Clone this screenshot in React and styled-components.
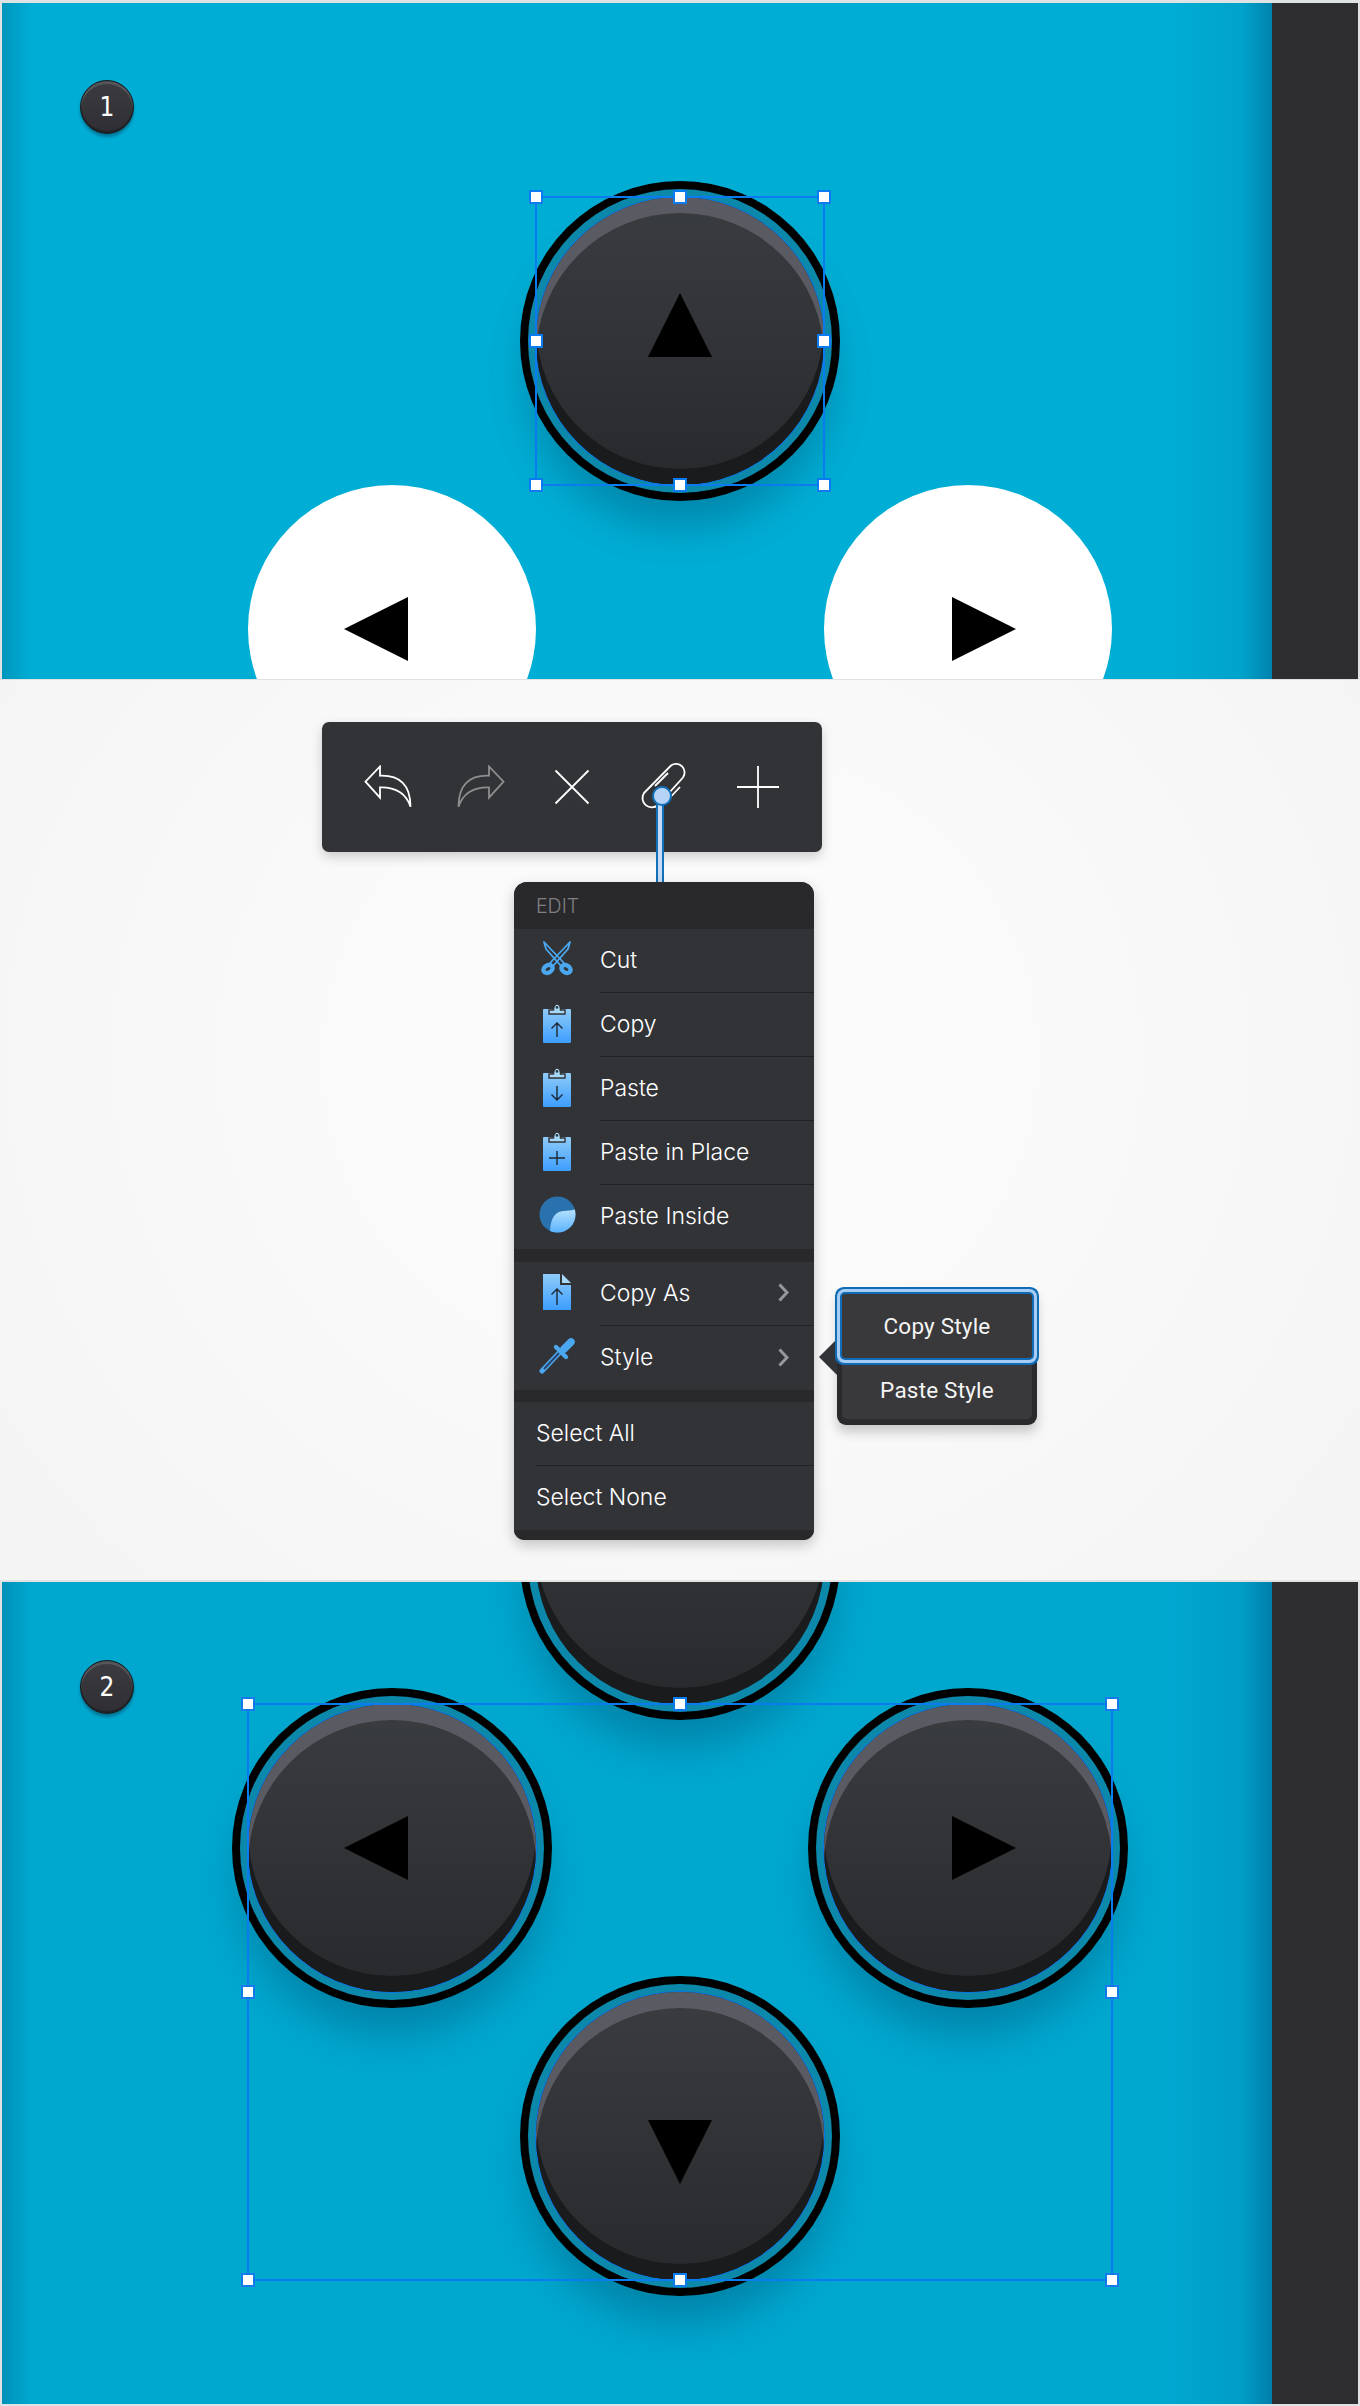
import React from "react";
import styled, { createGlobalStyle } from "styled-components";

const GlobalStyle = createGlobalStyle`
  html, body {
    margin: 0;
    padding: 0;
    background: #dfe3e4;
  }
  * {
    box-sizing: border-box;
  }
`;

const Page = styled.div`
  width: 1360px;
  height: 2406px;
  padding-top: 3px;
  display: flex;
  flex-direction: column;
  font-family: Inter, "Liberation Sans", sans-serif;
`;

const CanvasPanel = styled.section`
  height: ${(p) => p.$height}px;
  margin: 0 2px;
  display: flex;
  flex: none;
`;

const Canvas = styled.div`
  position: relative;
  flex: 1;
  overflow: hidden;
  background:
    linear-gradient(to right, rgba(0, 70, 110, 0.24) 0, rgba(0, 70, 110, 0) 30px),
    linear-gradient(to left, rgba(0, 60, 110, 0.38) 0, rgba(0, 60, 110, 0.1) 30px, rgba(0, 60, 110, 0) 110px),
    ${(p) => p.$base};
`;

const Sidebar = styled.div`
  width: 86px;
  background: #2e2e30;
`;

const Badge = styled.div`
  position: absolute;
  left: 78px;
  top: ${(p) => p.$top}px;
  width: 54px;
  height: 54px;
  border-radius: 50%;
  display: flex;
  align-items: center;
  justify-content: center;
  color: #fff;
  font-family: "DejaVu Sans", sans-serif;
  font-stretch: condensed;
  font-size: 26px;
  background: linear-gradient(#3b3b40, #2f2f33);
  border: 1.5px solid #17181a;
  box-shadow:
    inset 0 3px 0 #55565c,
    inset 0 -2px 0 #222326,
    0 3px 3px rgba(0, 70, 100, 0.5);
`;

const ControlButton = styled.div`
  position: absolute;
  left: ${(p) => p.$x - 144}px;
  top: ${(p) => p.$y - 144}px;
  width: 288px;
  height: 288px;
  border-radius: 50%;
  display: flex;
  align-items: center;
  justify-content: center;
  background: ${(p) => (p.$blank ? "#fff" : "linear-gradient(#3a3d40, #28292c)")};
  box-shadow: ${(p) =>
    p.$blank
      ? "none"
      : `inset 0 16px 0 #5a5b62, inset 0 -16px 0 #1a1b1d,
         ${p.$selected ? "0 0 0 1px #0a74e8," : ""}
         0 0 0 8px #0c88aa, 0 0 0 16px #000,
         0 34px 44px 8px rgba(0, 60, 90, 0.34)`};
`;

const arrowShift = { up: [0, -16], down: [0, 16], left: [-16, 0], right: [16, 0] };
const arrowTurn = { up: 0, right: 90, down: 180, left: 270 };

const ArrowSvg = styled.svg`
  width: 64px;
  height: 64px;
  transform: translate(${(p) => arrowShift[p.$dir][0]}px, ${(p) => arrowShift[p.$dir][1]}px)
    rotate(${(p) => arrowTurn[p.$dir]}deg);
`;

const Arrow = ({ dir }) => (
  <ArrowSvg $dir={dir} viewBox="0 0 64 64">
    <polygon points="32,0 64,64 0,64" fill="#000" />
  </ArrowSvg>
);

const SelectionBox = styled.div`
  position: absolute;
  left: ${(p) => p.$x}px;
  top: ${(p) => p.$y}px;
  width: ${(p) => p.$w}px;
  height: ${(p) => p.$h}px;
  outline: 2px solid #0a7cf0;
  outline-offset: -1px;
`;

const Handle = styled.span`
  position: absolute;
  left: ${(p) => p.$px}%;
  top: ${(p) => p.$py}%;
  width: 14px;
  height: 14px;
  background: #fff;
  border: 2px solid #0a7cf0;
  transform: translate(-50%, -50%);
`;

const handleSpots = [
  [0, 0],
  [50, 0],
  [100, 0],
  [0, 50],
  [100, 50],
  [0, 100],
  [50, 100],
  [100, 100],
];

const Selection = ({ x, y, w, h }) => (
  <SelectionBox $x={x} $y={y} $w={w} $h={h}>
    {handleSpots.map(([px, py]) => (
      <Handle key={`${px}-${py}`} $px={px} $py={py} />
    ))}
  </SelectionBox>
);

const MiddlePanel = styled.section`
  height: 903px;
  flex: none;
  padding-top: 42px;
  display: flex;
  flex-direction: column;
  align-items: flex-start;
  border-top: 1px solid #e2e2e2;
  border-bottom: 2px solid #e2e2e2;
  background: radial-gradient(ellipse 62% 85% at 50% 42%, #fbfbfb 30%, #f4f4f4 100%);
`;

const Toolbar = styled.div`
  position: relative;
  width: 500px;
  height: 130px;
  margin-left: 322px;
  padding: 0 18px 0 20px;
  display: grid;
  grid-template-columns: repeat(5, 1fr);
  align-items: center;
  justify-items: center;
  border-radius: 7px;
  background: #323337;
  box-shadow: 0 5px 12px rgba(0, 0, 0, 0.18);
`;

const ToolIcon = styled.svg`
  display: block;
  fill: none;
  stroke: ${(p) => p.$color || "#fff"};
  stroke-width: 1.8;
  transform: translateX(${(p) => p.$dx || 0}px);
`;

const Connector = styled.div`
  position: absolute;
  left: 334px;
  top: 72px;
  width: 8px;
  height: 90px;
  background: #c6dcf6;
  border-left: 2px solid #1270b8;
  border-right: 2px solid #1270b8;

  &::before {
    content: "";
    position: absolute;
    left: -6px;
    top: -8px;
    width: 16px;
    height: 16px;
    border-radius: 50%;
    background: #b6d4f7;
    border: 2px solid #1270b8;
  }
`;

const Menu = styled.div`
  position: relative;
  width: 300px;
  margin: 30px 0 0 514px;
  border-radius: 13px 13px 11px 11px;
  background: #323337;
  box-shadow: 0 5px 14px rgba(0, 0, 0, 0.22);
`;

const MenuHeader = styled.div`
  height: 47px;
  padding-left: 22px;
  display: flex;
  align-items: center;
  color: #808084;
  font-size: 19.5px;
  font-weight: 350;
  border-radius: 13px 13px 0 0;
  background: #29292c;
`;

const MenuBand = styled.div`
  height: ${(p) => p.$height}px;
  background: #29292c;
  border-radius: ${(p) => (p.$last ? "0 0 11px 11px" : "0")};
`;

const MenuRow = styled.div`
  height: 64px;
  padding-left: ${(p) => (p.$plain ? 22 : 0)}px;
  display: flex;
  align-items: center;
`;

const IconSlot = styled.div`
  width: 86px;
  padding-bottom: 5px;
  display: flex;
  justify-content: center;
  align-items: center;
`;

const RowLabel = styled.div`
  flex: 1;
  height: 100%;
  padding: 0 25px 2px 0;
  display: flex;
  align-items: center;
  justify-content: space-between;
  color: #fff;
  font-size: 23px;
  font-weight: 350;
  border-bottom: ${(p) => (p.$last ? "none" : "1px solid #212225")};
`;

const Popover = styled.div`
  position: absolute;
  left: 323px;
  top: 408px;
  width: 200px;
  padding: 4px 5px 6px;
  border-radius: 4px 4px 9px 9px;
  background: #2a2a2d;
  box-shadow: 0 7px 12px rgba(0, 0, 0, 0.2);

  &::before {
    content: "";
    position: absolute;
    left: -18px;
    top: 49px;
    border-top: 18px solid transparent;
    border-bottom: 18px solid transparent;
    border-right: 18px solid #323337;
  }
`;

const PopoverItem = styled.div`
  position: relative;
  height: ${(p) => (p.$active ? 64 : 61)}px;
  padding-top: ${(p) => (p.$active ? 0 : 2)}px;
  display: flex;
  align-items: center;
  justify-content: center;
  color: #f5f5f5;
  font-family: Roboto, "Liberation Sans", sans-serif;
  font-weight: 450;
  font-size: 22.5px;
  letter-spacing: 0.2px;
  background: #39393b;
  border-radius: ${(p) => (p.$active ? "3px" : "0 0 5px 5px")};
  z-index: ${(p) => (p.$active ? 1 : 0)};
  box-shadow: ${(p) =>
    p.$active ? "0 0 0 2px #0f6cb5, 0 0 0 5px #a8cdf5, 0 0 0 7px #0f6cb5" : "none"};
`;

const IconFill = () => (
  <defs>
    <linearGradient id="iconFill" x1="0" y1="0" x2="0" y2="1">
      <stop offset="0" stopColor="#8fcbf8" />
      <stop offset="1" stopColor="#3d9eff" />
    </linearGradient>
  </defs>
);

const Scissors = () => (
  <svg width="32" height="35" viewBox="0 0 32 35" fill="none">
    <path d="M3 1 L5 8 L20 25 L23 22 Z" stroke="#4ba8f0" strokeWidth="1.8" strokeLinejoin="round" />
    <path d="M29 1 L27 8 L12 25 L9 22 Z" stroke="#4ba8f0" strokeWidth="1.8" strokeLinejoin="round" />
    <ellipse cx="7" cy="28" rx="4.8" ry="3.6" stroke="#4ba8f0" strokeWidth="4.4" transform="rotate(-30 7 28)" />
    <ellipse cx="25" cy="28" rx="4.8" ry="3.6" stroke="#4ba8f0" strokeWidth="4.4" transform="rotate(30 25 28)" />
  </svg>
);

const clipGlyphs = {
  up: "M14 34 V20 M8.5 25.5 L14 20 L19.5 25.5",
  down: "M14 19 V33 M8.5 27.5 L14 33 L19.5 27.5",
  plus: "M14 20 V34 M6 27 H22",
};

const Clipboard = ({ glyph }) => (
  <svg width="28" height="40" viewBox="0 0 28 40" fill="none">
    <IconFill />
    <rect x="0" y="6" width="28" height="34" rx="1" fill="url(#iconFill)" />
    <path
      d="M6 11 V7 H10.5 C10.5 -1 17.5 -1 17.5 7 H22 V11 Z"
      fill="#a6d8fa"
      stroke="#323337"
      strokeWidth="1.4"
    />
    <circle cx="14" cy="4.4" r="1.3" fill="#323337" />
    <path d={clipGlyphs[glyph]} stroke="#1c2733" strokeWidth="1.4" />
  </svg>
);

const PasteInside = () => (
  <svg width="37" height="37" viewBox="0 0 37 37">
    <defs>
      <clipPath id="pasteRound">
        <circle cx="18.5" cy="18.5" r="18" />
      </clipPath>
      <linearGradient id="pasteLight" x1="0" y1="0" x2="0" y2="1">
        <stop offset="0" stopColor="#b8e2fd" />
        <stop offset="1" stopColor="#58b2ff" />
      </linearGradient>
    </defs>
    <circle cx="18.5" cy="18.5" r="18" fill="#2a72ae" />
    <path
      d="M11 37 C11 26 14 16 24 15 C28 14.6 33 15 37 13 V37 Z"
      fill="url(#pasteLight)"
      clipPath="url(#pasteRound)"
    />
  </svg>
);

const CopyAsDoc = () => (
  <svg width="28" height="36" viewBox="0 0 28 36" fill="none">
    <IconFill />
    <path d="M0 0 H17 V11 H28 V36 H0 Z" fill="url(#iconFill)" />
    <path d="M19 0 L28 9 H19 Z" fill="#a6d8fa" />
    <path d="M14 31 V15 M8.5 20.5 L14 15 L19.5 20.5" stroke="#1c2733" strokeWidth="1.4" />
  </svg>
);

const Eyedropper = () => (
  <svg width="37" height="36" viewBox="0 0 37 36" fill="none">
    <path d="M3 33 L21 14" stroke="#4ba8f0" strokeWidth="5" strokeLinecap="round" />
    <path d="M5 31 L21 14" stroke="#27456f" strokeWidth="2" />
    <path d="M17 9 L27 19" stroke="#4ba8f0" strokeWidth="4.4" strokeLinecap="round" />
    <path d="M25 11 L32 4" stroke="#4ba8f0" strokeWidth="7.5" strokeLinecap="round" />
  </svg>
);

const Chevron = () => (
  <svg width="11" height="19" viewBox="0 0 11 19" fill="none">
    <path d="M1.5 1.5 L9 9.5 L1.5 17.5" stroke="#98989c" strokeWidth="3" />
  </svg>
);

const topRows = [
  { label: "Cut", icon: <Scissors /> },
  { label: "Copy", icon: <Clipboard glyph="up" /> },
  { label: "Paste", icon: <Clipboard glyph="down" /> },
  { label: "Paste in Place", icon: <Clipboard glyph="plus" /> },
  { label: "Paste Inside", icon: <PasteInside />, last: true },
];

const App = () => {
  return (
    <Page>
      <GlobalStyle />

      <CanvasPanel $height={676}>
        <Canvas $base="#00aed5">
          <Badge $top={77}>1</Badge>
          <ControlButton $x={678} $y={338} $selected>
            <Arrow dir="up" />
          </ControlButton>
          <ControlButton $x={390} $y={626} $blank>
            <Arrow dir="left" />
          </ControlButton>
          <ControlButton $x={966} $y={626} $blank>
            <Arrow dir="right" />
          </ControlButton>
          <Selection x={534} y={194} w={288} h={288} />
        </Canvas>
        <Sidebar />
      </CanvasPanel>

      <MiddlePanel>
        <Toolbar>
          <ToolIcon width="48" height="44" viewBox="0 0 48 44">
            <path d="M1.5 16.7 L16 1.5 V10.7 C36 10 46.5 20 46.5 41.7 C42 28 32 22 16 22.3 V32.7 Z" />
          </ToolIcon>
          <ToolIcon width="48" height="44" viewBox="0 0 48 44" $color="#8e8e90">
            <path d="M46.5 16.7 L32 1.5 V10.7 C12 10 1.5 20 1.5 41.7 C6 28 16 22 32 22.3 V32.7 Z" />
          </ToolIcon>
          <ToolIcon width="36" height="36" viewBox="0 0 36 36" $dx={-1}>
            <path d="M1.5 1.5 L34.5 34.5 M34.5 1.5 L1.5 34.5" />
          </ToolIcon>
          <ToolIcon width="48" height="50" viewBox="0 0 48 50" $dx={-2}>
            <path d="M5 31 L32 3.5 A8.6 8.6 0 0 1 44 15.5 L19 43 A9.3 9.3 0 0 1 5 31 Z" />
            <path d="M29 11 L16 24 M41 25 L24 43" />
          </ToolIcon>
          <ToolIcon width="42" height="42" viewBox="0 0 42 42">
            <path d="M21 0 V42 M0 21 H42" />
          </ToolIcon>
          <Connector />
        </Toolbar>

        <Menu>
          <MenuHeader>EDIT</MenuHeader>
          {topRows.map((row) => (
            <MenuRow key={row.label}>
              <IconSlot>{row.icon}</IconSlot>
              <RowLabel $last={row.last}>{row.label}</RowLabel>
            </MenuRow>
          ))}
          <MenuBand $height={13} />
          <MenuRow>
            <IconSlot>
              <CopyAsDoc />
            </IconSlot>
            <RowLabel>
              Copy As
              <Chevron />
            </RowLabel>
          </MenuRow>
          <MenuRow>
            <IconSlot>
              <Eyedropper />
            </IconSlot>
            <RowLabel $last>
              Style
              <Chevron />
            </RowLabel>
          </MenuRow>
          <MenuBand $height={12} />
          <MenuRow $plain>
            <RowLabel>Select All</RowLabel>
          </MenuRow>
          <MenuRow $plain>
            <RowLabel $last>Select None</RowLabel>
          </MenuRow>
          <MenuBand $height={10} $last />

          <Popover>
            <PopoverItem $active>Copy Style</PopoverItem>
            <PopoverItem>Paste Style</PopoverItem>
          </Popover>
        </Menu>
      </MiddlePanel>

      <CanvasPanel $height={822}>
        <Canvas $base="#00a8d0">
          <Badge $top={78}>2</Badge>
          <ControlButton $x={678} $y={-22} />
          <ControlButton $x={390} $y={266} $selected>
            <Arrow dir="left" />
          </ControlButton>
          <ControlButton $x={966} $y={266} $selected>
            <Arrow dir="right" />
          </ControlButton>
          <ControlButton $x={678} $y={554} $selected>
            <Arrow dir="down" />
          </ControlButton>
          <Selection x={246} y={122} w={864} h={576} />
        </Canvas>
        <Sidebar />
      </CanvasPanel>
    </Page>
  );
};

export default App;
